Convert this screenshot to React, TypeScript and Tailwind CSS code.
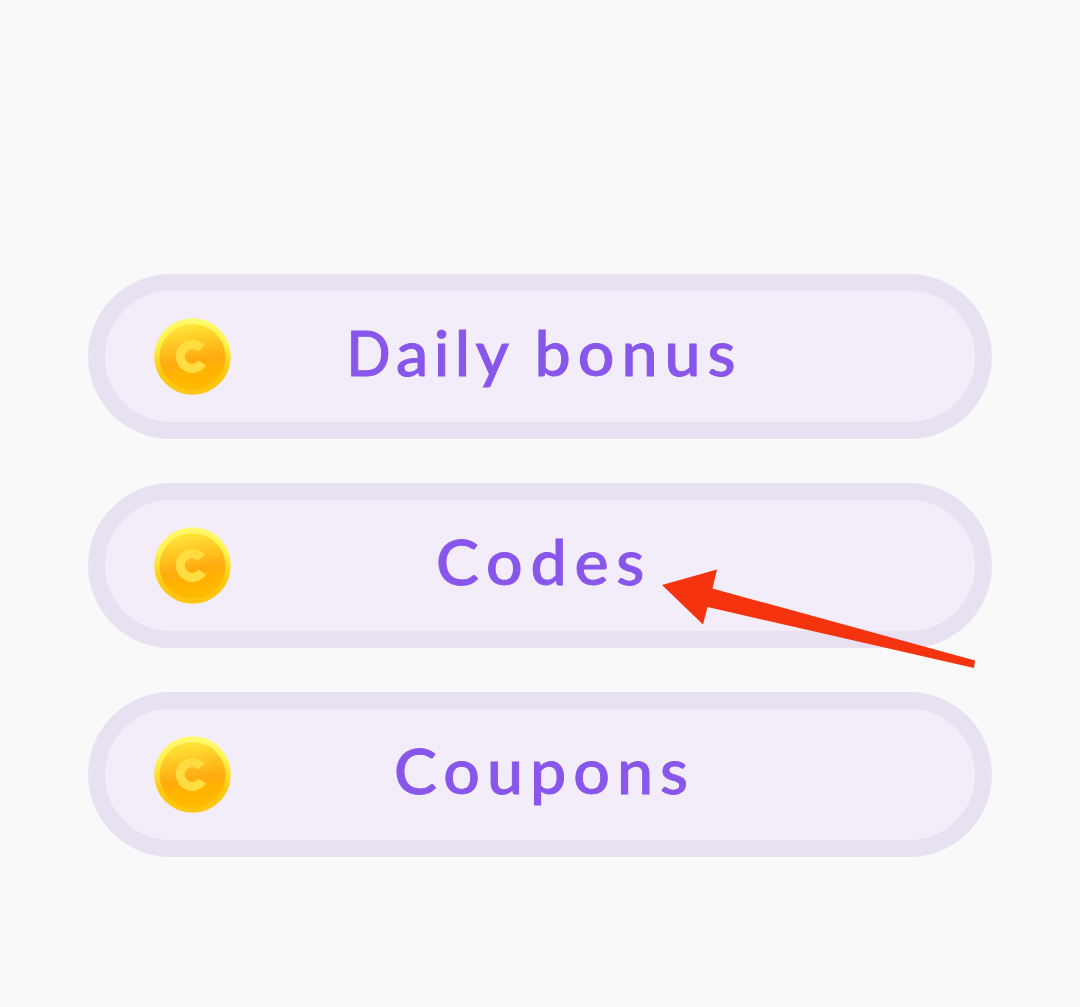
type Word = { text: string; style: string };

const buttons: { label: string; place: string; words: Word[] }[] = [
  {
    label: "Daily bonus",
    place: "left-[240.5px]",
    words: [
      { text: "D", style: "inline-block origin-[4px_50%] scale-x-[0.9] tracking-[1px]" },
      { text: "aily ", style: "tracking-[5.1px]" },
      { text: "bonus", style: "tracking-[6.6px]" },
    ],
  },
  {
    label: "Codes",
    place: "left-[330.5px]",
    words: [{ text: "Codes", style: "tracking-[7.3px]" }],
  },
  {
    label: "Coupons",
    place: "left-[288.5px]",
    words: [{ text: "Coupons", style: "tracking-[6.6px]" }],
  },
];

function Coin({ id }: { id: string }) {
  return (
    <svg viewBox="0 0 78 78" className="ml-12 h-[78px] w-[78px] shrink-0" aria-hidden="true">
      <defs>
        <linearGradient id={`rim-${id}`} x1="0" y1="0" x2="0" y2="1">
          <stop offset="0" stopColor="#fffb70" />
          <stop offset="0.35" stopColor="#fff04a" />
          <stop offset="0.7" stopColor="#ffc90d" />
          <stop offset="1" stopColor="#ffc414" />
        </linearGradient>
        <linearGradient id={`face-${id}`} x1="0.42" y1="0" x2="0.58" y2="1">
          <stop offset="0" stopColor="#ffe638" />
          <stop offset="0.25" stopColor="#ffcb27" />
          <stop offset="0.55" stopColor="#ffab10" />
          <stop offset="0.75" stopColor="#ffb400" />
          <stop offset="1" stopColor="#ffbc00" />
        </linearGradient>
        <filter id={`soft-${id}`}>
          <feGaussianBlur stdDeviation="0.6" />
        </filter>
      </defs>
      <circle cx="39.5" cy="39.5" r="38.3" fill={`url(#rim-${id})`} />
      <circle cx="39.5" cy="40" r="33" fill={`url(#face-${id})`} filter={`url(#soft-${id})`} />
      <path
        d="M49.5 31.5A12 12 0 1 0 50.5 46"
        fill="none"
        stroke="#ffdc40"
        strokeWidth="9"
        transform="translate(-1.2 0)"
      />
    </svg>
  );
}

export default function App() {
  return (
    <main className="h-[1007px] w-[1080px] overflow-hidden bg-[#f9f9f9] pt-[273.5px]">
      <div className="relative mx-[88px] flex flex-col gap-11">
        {buttons.map(({ label, place, words }) => (
          <button
            key={label}
            type="button"
            className="relative flex h-[165px] w-full items-center rounded-full border-[17px] border-[#e8e1f2] bg-[#f2edf8]"
          >
            <Coin id={label[2]} />
            <span
              className={`absolute top-[24px] origin-left scale-x-[1.06] font-['Lato',sans-serif] text-[60.8px] leading-[76px] font-medium whitespace-pre text-[#8856ea] [-webkit-text-stroke:0.9px_#8856ea] ${place}`}
            >
              {words.map(({ text, style }) => (
                <span key={text} className={style}>
                  {text}
                </span>
              ))}
            </span>
          </button>
        ))}
        <svg
          viewBox="0 0 314 100"
          className="pointer-events-none absolute top-[295.5px] left-[574px] h-[100px] w-[314px]"
          aria-hidden="true"
        >
          <path d="M0 16L55 .5L50.5 19.5L313 91.5L312 99L45.5 38L41 55.5Z" fill="#f5330f" />
        </svg>
      </div>
    </main>
  );
}
